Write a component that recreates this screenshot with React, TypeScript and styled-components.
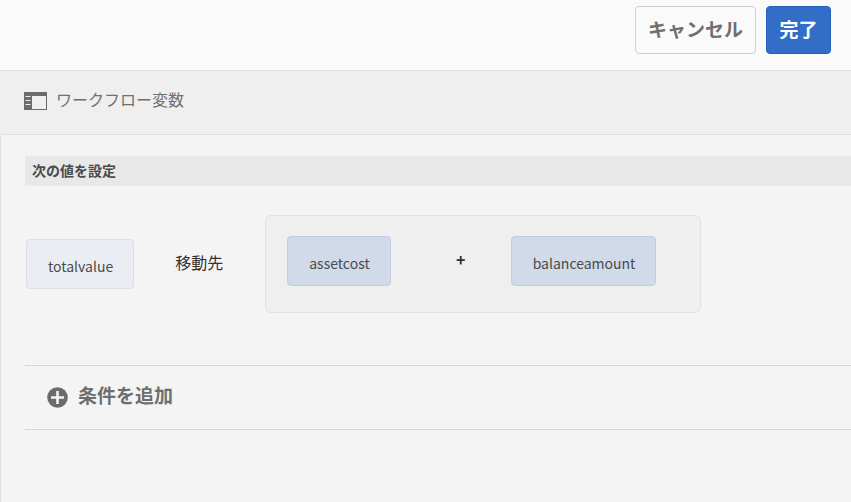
import React from "react";
import styled, { createGlobalStyle } from "styled-components";

const GlobalStyle = createGlobalStyle`
  *, *::before, *::after { box-sizing: border-box; }
  body {
    margin: 0;
    background: #f4f4f4;
    color: #323232;
    font-family: "Noto Sans CJK JP", sans-serif;
    font-size: 16px;
    line-height: 24px;
  }
`;

const Page = styled.div`
  display: flex;
  flex-direction: column;
  min-height: 100vh;
`;

const ActionBar = styled.header`
  display: flex;
  justify-content: flex-end;
  gap: 10px;
  padding: 6px 20px 16px;
  background: #fafafa;
`;

const Button = styled.button<{ $primary?: boolean }>`
  height: 48px;
  min-width: 65px;
  padding: 0 12px 2px;
  border: 1px solid ${(p) => (p.$primary ? "#2262bd" : "#cfcfcf")};
  border-radius: 4px;
  background: ${(p) => (p.$primary ? "#326ec8" : "#fafafa")};
  color: ${(p) => (p.$primary ? "#ffffff" : "#707070")};
  font-family: inherit;
  font-size: 19px;
  font-weight: 700;
  line-height: 24px;
  white-space: nowrap;
  cursor: pointer;
`;

const TitleBar = styled.div`
  display: flex;
  align-items: center;
  gap: 9px;
  height: 64px;
  padding: 0 24px 4px;
  border-top: 1px solid #e4e4e4;
  background: #efefef;
  color: #707070;
`;

const Title = styled.h1`
  margin: 0;
  padding-bottom: 4px;
  font-size: 16px;
  font-weight: 400;
`;

const Content = styled.main`
  flex: 1;
  padding: 21px 0 0 24px;
  border-top: 1px solid #e0e0e0;
  border-left: 1px solid #e0e0e0;
`;

const SectionTitle = styled.h2`
  margin: 0;
  padding: 0 7px 2px;
  background: #e8e8e8;
  color: #4b4b4b;
  font-size: 14px;
  font-weight: 700;
  line-height: 28px;
`;

const Expression = styled.div`
  display: flex;
  align-items: center;
  padding: 29px 1px 52px;
`;

const Variable = styled.button<{ $operand?: boolean }>`
  height: 50px;
  padding: 4px 20px 0 21px;
  border: 1px solid ${(p) => (p.$operand ? "#c2cee0" : "#dcdfe3")};
  border-radius: 4px;
  background: ${(p) => (p.$operand ? "#d0dae8" : "#eaeef3")};
  color: #4b4b4b;
  font-family: inherit;
  font-size: 14px;
  line-height: 24px;
  cursor: pointer;
`;

const Relation = styled.span`
  padding: 0 42px 4px 41px;
`;

const Operands = styled.div`
  display: flex;
  align-items: center;
  padding: 20px 44px 26px 21px;
  border: 1px solid #e2e2e2;
  border-radius: 6px;
  background: #efefef;
`;

const Operator = styled.span`
  width: 120px;
  padding: 0 0 4px 20px;
  text-align: center;
  font-weight: 700;
`;

const AddRow = styled.div`
  padding: 15px 22px 16px;
  border-top: 1px solid #d8d8d8;
  border-bottom: 1px solid #d8d8d8;
`;

const AddButton = styled.button`
  display: flex;
  align-items: center;
  gap: 10px;
  padding: 0;
  border: 0;
  background: none;
  color: #6e6e6e;
  font-family: inherit;
  font-size: 19px;
  font-weight: 700;
  line-height: 28px;
  cursor: pointer;
`;

const AddLabel = styled.span`
  padding-bottom: 4px;
`;

const PanelIcon = () => (
  <svg width="23" height="18" viewBox="0 0 23 18" aria-hidden="true">
    <path
      fill="#6b6b6b"
      fillRule="evenodd"
      d="M0 0H23V18H0ZM8 4V17H22V4Z"
    />
    <path fill="none" stroke="#efefef" d="M1.5 4.5H6.5M1.5 8.5H6.5M1.5 12.5H6.5" />
  </svg>
);

const AddIcon = () => (
  <svg width="21" height="21" viewBox="0 0 21 21" aria-hidden="true">
    <circle cx="10.5" cy="10.5" r="10.3" fill="#6b6b6b" />
    <path stroke="#f4f4f4" strokeWidth="2.6" d="M10.5 4V17M4 10.5H17" />
  </svg>
);

export default function App() {
  return (
    <Page>
      <GlobalStyle />
      <ActionBar>
        <Button type="button">キャンセル</Button>
        <Button type="button" $primary>
          完了
        </Button>
      </ActionBar>
      <TitleBar>
        <PanelIcon />
        <Title>ワークフロー変数</Title>
      </TitleBar>
      <Content>
        <SectionTitle>次の値を設定</SectionTitle>
        <Expression>
          <Variable type="button">totalvalue</Variable>
          <Relation>移動先</Relation>
          <Operands>
            <Variable type="button" $operand>
              assetcost
            </Variable>
            <Operator>+</Operator>
            <Variable type="button" $operand>
              balanceamount
            </Variable>
          </Operands>
        </Expression>
        <AddRow>
          <AddButton type="button">
            <AddIcon />
            <AddLabel>条件を追加</AddLabel>
          </AddButton>
        </AddRow>
      </Content>
    </Page>
  );
}
